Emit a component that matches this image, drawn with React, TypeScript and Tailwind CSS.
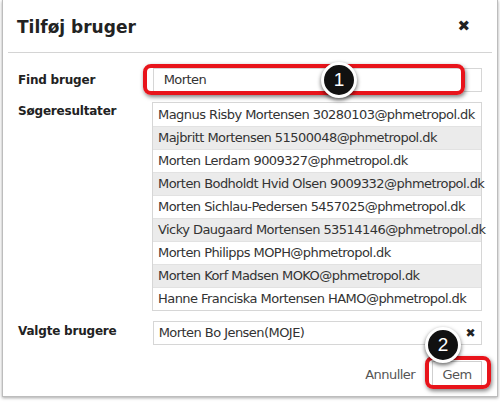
const results = [
  'Magnus Risby Mortensen 30280103@phmetropol.dk',
  'Majbritt Mortensen 51500048@phmetropol.dk',
  'Morten Lerdam 9009327@phmetropol.dk',
  'Morten Bodholdt Hvid Olsen 9009332@phmetropol.dk',
  'Morten Sichlau-Pedersen 5457025@phmetropol.dk',
  'Vicky Daugaard Mortensen 53514146@phmetropol.dk',
  'Morten Philipps MOPH@phmetropol.dk',
  'Morten Korf Madsen MOKO@phmetropol.dk',
  'Hanne Franciska Mortensen HAMO@phmetropol.dk',
];

function Badge({ n }: { n: number }) {
  return (
    <div className="w-[36px] h-[36px] rounded-full bg-[#111] border-[3px] border-white shadow-[0_2px_4px_rgba(0,0,0,0.6)] flex items-center justify-center text-white text-[19px] font-['Liberation_Sans',Arial,sans-serif]">
      {n}
    </div>
  );
}

export default function App() {
  return (
    <div className="relative w-[500px] h-[402px] bg-white overflow-hidden font-['DejaVu_Sans',Verdana,sans-serif] text-[#333]">
      <div className="ml-[2px] w-[496px] h-[397px] bg-white border-x border-b border-[#bdbdbd] shadow-[0_1px_3px_rgba(0,0,0,0.35)]">
        {/* Header */}
        <div className="mx-[5px] h-[53px] border-b border-[#d4d4d4] flex items-center justify-between pl-[9px] pr-[22px]">
          <h1 className="text-[17px] font-bold text-[#222] pt-[3px]">Tilføj bruger</h1>
          <span className="text-[15px] font-bold text-[#222] pt-[1px]">✖</span>
        </div>

        {/* Body */}
        <div className="pl-[15px] pr-[15px] pt-[15px] text-[13px] tracking-[-0.55px]">
          <div className="flex items-center">
            <label className="w-[135px] font-bold text-[12px] tracking-[-0.2px] text-[#222]">Find bruger</label>
            <div className="w-[330px] h-[24px] border border-[#d6d6d6] px-[10px] flex items-center text-[#333]">
              Morten
            </div>
          </div>

          <div className="flex mt-[10px]">
            <label className="w-[135px] font-bold text-[12px] tracking-[-0.2px] text-[#222]">Søgeresultater</label>
            <div className="w-[330px] border border-[#d6d6d6]">
              {results.map((r, i) => (
                <div
                  key={r}
                  className={`h-[23px] px-[5px] flex items-center whitespace-nowrap ${i % 2 === 1 ? 'bg-[#ebebeb]' : 'bg-white'} ${i > 0 ? 'border-t border-[#e2e2e2]' : ''}`}
                >
                  {r}
                </div>
              ))}
            </div>
          </div>

          <div className="flex mt-[10px]">
            <label className="w-[135px] font-bold text-[12px] tracking-[-0.2px] text-[#222] pt-[1px]">Valgte brugere</label>
            <div className="w-[330px] h-[24px] border border-[#d6d6d6] pl-[5px] pr-[6px] flex items-center justify-between">
              <span>Morten Bo Jensen(MOJE)</span>
              <span className="text-[12px] font-bold text-[#222]">✖</span>
            </div>
          </div>

          <div className="flex justify-end items-center mt-[16px] gap-[17px]">
            <span className="text-[#555]">Annuller</span>
            <button className="w-[50px] h-[27px] border border-[#cfcfcf] bg-white text-[#555] text-[13px]">Gem</button>
          </div>
        </div>
      </div>

      {/* Annotations */}
      <div className="absolute left-[143px] top-[64px] w-[322px] h-[31px] rounded-[8px] border-[4px] border-[#e8141b] shadow-[1px_2px_4px_rgba(0,0,0,0.5)]" />
      <div className="absolute left-[321px] top-[62px]">
        <Badge n={1} />
      </div>
      <div className="absolute left-[425px] top-[356px] w-[66px] h-[33px] rounded-[8px] border-[4px] border-[#e8141b] shadow-[1px_2px_4px_rgba(0,0,0,0.5)]" />
      <div className="absolute left-[425px] top-[327px]">
        <Badge n={2} />
      </div>
    </div>
  );
}
